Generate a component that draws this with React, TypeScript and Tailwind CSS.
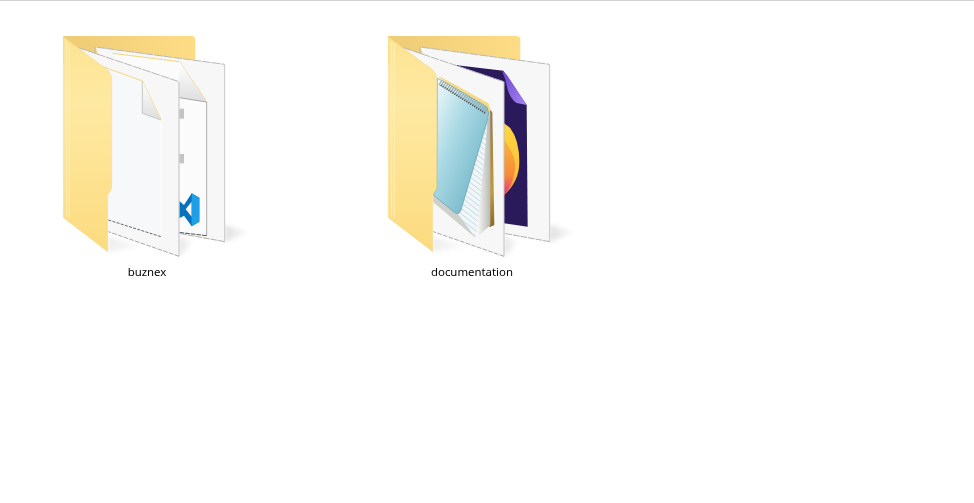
import type { ReactNode } from "react";

// icon coordinates are in a 630x702 box, drawn at a third of that (234px high)
function FolderIcon({ id, children }: { id: string; children: ReactNode }) {
  return (
    <svg width="210" height="234" viewBox="0 0 630 702" className="block">
      <defs>
        <linearGradient id={`${id}-back`} x1="0" y1="0" x2="1" y2="0">
          <stop offset="0" stopColor="#eecb74" />
          <stop offset="1" stopColor="#fcdd86" />
        </linearGradient>
        <linearGradient id={`${id}-front`} x1="0" y1="0" x2="0" y2="1">
          <stop offset="0" stopColor="#fde391" />
          <stop offset="0.3" stopColor="#fee9a3" />
          <stop offset="1" stopColor="#fcdb7f" />
        </linearGradient>
        <linearGradient id={`${id}-shade`} x1="0" y1="0" x2="1" y2="0">
          <stop offset="0" stopColor="#a8a8a8" />
          <stop offset="1" stopColor="#ffffff" />
        </linearGradient>
        <filter id={`${id}-blur`}>
          <feGaussianBlur stdDeviation="7" />
        </filter>
      </defs>
      <g filter={`url(#${id}-blur)`}>
        <path d="M524 600 L524 650 L605 622 Z" fill={`url(#${id}-shade)`} opacity="0.35" />
        <path d="M387 635 L387 694 L435 650 Z" fill={`url(#${id}-shade)`} opacity="0.3" />
        <path d="M173 635 L173 680 L290 665 Z" fill={`url(#${id}-shade)`} opacity="0.2" />
      </g>
      <path d="M40 33 H424 Q436 33 436 45 V115 H40 Z" fill={`url(#${id}-back)`} />
      <path d="M135 66 L524 118 V650 L387 625 Z" fill="#f7f7f7" />
      <path d="M135 90 V66 L524 118" fill="none" stroke="#b8b8b8" strokeWidth="3" strokeDasharray="26 3" />
      <path d="M524 118 V650" fill="none" stroke="#c8c8c8" strokeWidth="3" />
      <path d="M524 650 L387 625" fill="none" stroke="#b0b0b0" strokeWidth="3" strokeDasharray="20 3" />
      {children}
      <path
        d="M40 35 L150 118 Q185 137 185 160 V490 L173 510 V680 L40 578 Z"
        fill={`url(#${id}-front)`}
        stroke="#ecce80"
        strokeWidth="1"
      />
      <path d="M50 50 V575 M58 55 V580" stroke="#ffefb5" strokeWidth="3" fill="none" />
    </svg>
  );
}

function FrontPage({ children }: { children?: ReactNode }) {
  return (
    <g>
      <path d="M85 68 L387 170 V694 L175 620 V325 Z" fill="#f7f7f7" />
      <path d="M85 68 L387 170" fill="none" stroke="#b8b8b8" strokeWidth="3" strokeDasharray="26 3" />
      <path d="M387 170 V694" fill="none" stroke="#c0c0c0" strokeWidth="3" />
      <path d="M387 694 L175 620" fill="none" stroke="#a8a8a8" strokeWidth="3" strokeDasharray="14 4" />
      {children}
    </g>
  );
}

function CodeFolder() {
  return (
    <FolderIcon id="code">
      <defs>
        <linearGradient id="fold" x1="0" y1="0" x2="0" y2="1">
          <stop offset="0" stopColor="#ffffff" />
          <stop offset="1" stopColor="#dedede" />
        </linearGradient>
      </defs>
      {/* second document with the editor logo */}
      <path d="M188 85 L388 110 L470 230 V632 L385 622 Z" fill="#fbfbfb" />
      <path d="M188 85 L388 110 L468 226" fill="none" stroke="#f5d67c" strokeWidth="3" />
      <path d="M470 230 V632" fill="none" stroke="#8a8a8a" strokeWidth="2" />
      <path d="M470 632 L385 622" fill="none" stroke="#555" strokeWidth="3" strokeDasharray="14 3" />
      <path d="M388 110 V218 L470 231 Z" fill="url(#fold)" />
      <path d="M388 218 L470 231" stroke="#a8a8a8" strokeWidth="3" />
      <rect x="388" y="251" width="14" height="30" fill="#c4c4c4" />
      <rect x="388" y="387" width="14" height="28" fill="#c4c4c4" />
      {/* editor logo */}
      <path
        fillRule="evenodd"
        d="M425 505 L448 518 V590 L425 604 L402 572 L388 580 V528 L402 540 Z M425 530 L407 553 L425 575 Z"
        fill="#0a72bd"
      />
      <path d="M425 505 L448 518 V590 L425 604 V575 L425 530 Z" fill="#1e9fe8" />
      <FrontPage>
        <path d="M150 122 L277 168 L333 283 V635 L175 585 V325 Z" fill="#f7f8f9" />
        <path d="M150 122 L277 168 L333 283" fill="none" stroke="#f6d77e" strokeWidth="3" />
        <path d="M333 283 V635" fill="none" stroke="#ffffff" strokeWidth="3" />
        <path d="M277 168 V265 L333 285 Z" fill="url(#fold)" />
        <path d="M277 168 V265 L333 285" fill="none" stroke="#b0b0b0" strokeWidth="2" />
        <path d="M175 585 L333 635" stroke="#666" strokeWidth="3" strokeDasharray="9 4" />
      </FrontPage>
    </FolderIcon>
  );
}

function DocsFolder() {
  return (
    <FolderIcon id="docs">
      <defs>
        <linearGradient id="flame" x1="0" y1="0" x2="0" y2="1">
          <stop offset="0" stopColor="#fdd63f" />
          <stop offset="0.7" stopColor="#fcc23c" />
          <stop offset="1" stopColor="#f6863a" />
        </linearGradient>
        <linearGradient id="flame-inner" x1="0" y1="0" x2="0" y2="1">
          <stop offset="0" stopColor="#fbb43a" />
          <stop offset="0.65" stopColor="#f78a3a" />
          <stop offset="1" stopColor="#e62f82" />
        </linearGradient>
        <linearGradient id="cover" x1="0" y1="0" x2="1" y2="1">
          <stop offset="0" stopColor="#f6fcfd" />
          <stop offset="0.4" stopColor="#a9d9e4" />
          <stop offset="1" stopColor="#5fa8bd" />
        </linearGradient>
        <linearGradient id="spine" x1="0" y1="0" x2="0" y2="1">
          <stop offset="0" stopColor="#8f7a4e" />
          <stop offset="0.7" stopColor="#c49a3a" />
          <stop offset="1" stopColor="#8a6a28" />
        </linearGradient>
        <linearGradient id="stack" x1="0" y1="0" x2="1" y2="0">
          <stop offset="0" stopColor="#ffffff" />
          <stop offset="1" stopColor="#b8b8b4" />
        </linearGradient>
        <linearGradient id="ear" x1="0" y1="0" x2="1" y2="1">
          <stop offset="0" stopColor="#6a45d0" />
          <stop offset="1" stopColor="#a585f2" />
        </linearGradient>
        <pattern id="lines" width="20" height="13" patternUnits="userSpaceOnUse" patternTransform="rotate(38)">
          <rect width="20" height="13" fill="#f1f6f9" />
          <rect width="20" height="2" fill="#b9d3e0" />
        </pattern>
      </defs>
      <path d="M240 120 L385 137 L455 240 L458 605 L387 595 Z" fill="#2a1a5c" />
      <path d="M380 135 L396 150 L455 240 L425 234 Q405 222 397 190 Q392 160 380 135 Z" fill="url(#ear)" />
      <path d="M387 295 L405 308 Q433 345 433 410 Q433 470 387 510 Z" fill="url(#flame)" />
      <path d="M387 345 Q425 395 420 435 Q412 485 387 510 Z" fill="url(#flame-inner)" />
      <FrontPage>
        {/* notepad */}
        <path d="M187 152 Q200 155 340 235 L350 262 L340 275 Z" fill="#f7d983" />
        <path d="M345 255 L352 262 L358 600 L345 606 L337 600 Z" fill="url(#spine)" />
        <path d="M175 505 L250 565 L303 640 L175 532 Z" fill="#cfcfcb" />
        <path d="M337 287 L346 262 V600 L303 640 Z" fill="url(#stack)" />
        <path d="M337 290 L248 566 L303 638 L328 400 Z" fill="url(#lines)" />
        <path
          d="M187 160 Q200 165 335 245 L341 263 L337 287 L258 555 Q252 572 238 562 L175 510 L185 490 Z"
          fill="url(#cover)"
          stroke="#5d9fb2"
          strokeWidth="2"
        />
        <path d="M195 172 L335 258" stroke="#9aa1a4" strokeWidth="18" strokeDasharray="3 4" fill="none" />
        <path d="M197 180 L333 266" stroke="#3d4448" strokeWidth="5" strokeDasharray="3 4" fill="none" />
      </FrontPage>
    </FolderIcon>
  );
}

export default function App() {
  const folders = [
    { name: "buznex", icon: <CodeFolder /> },
    { name: "documentation", icon: <DocsFolder /> },
  ];

  return (
    <div className="min-h-[503px] bg-white border-t border-[#d4d4d4] font-['Noto_Sans','Open_Sans',sans-serif]">
      <div className="flex gap-[115px] pl-[50px] pt-[24px]">
        {folders.map((folder) => (
          <div key={folder.name} className="w-[210px]">
            {folder.icon}
            <div className="mt-[5px] pr-[16px] text-center text-[11.4px] leading-[16px] text-black">
              {folder.name}
            </div>
          </div>
        ))}
      </div>
    </div>
  );
}
